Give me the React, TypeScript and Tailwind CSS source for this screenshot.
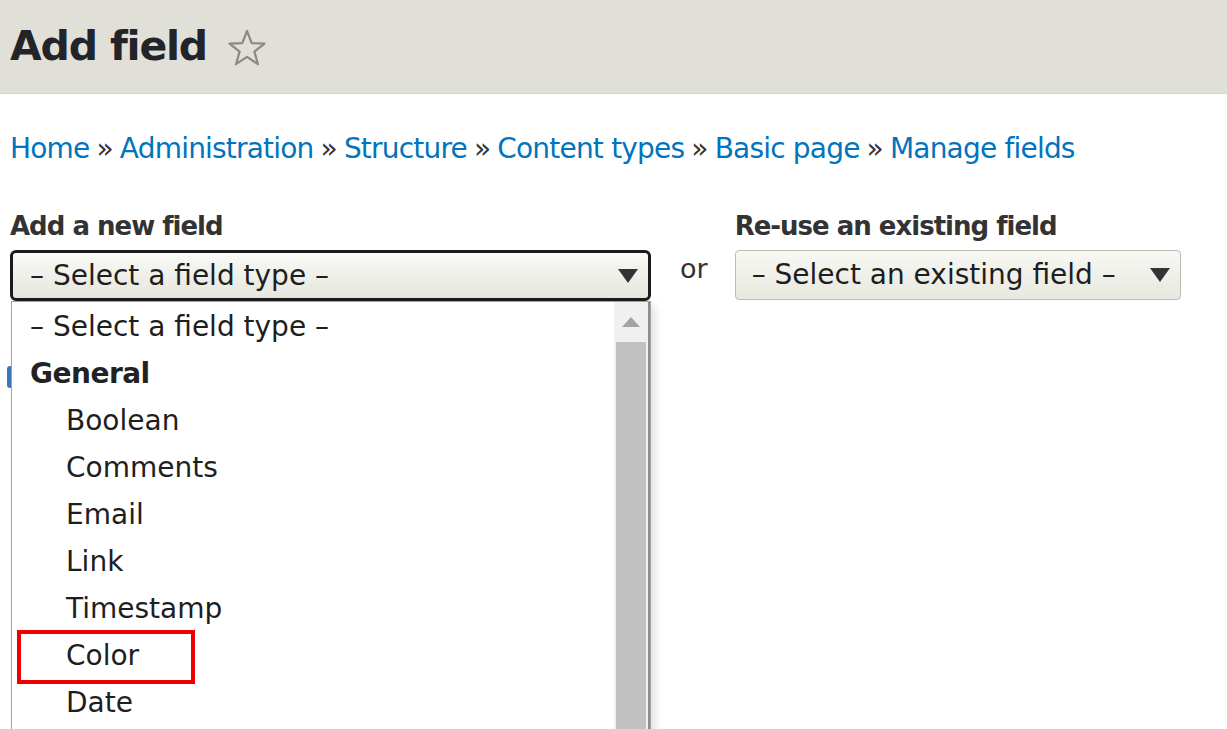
import React from "react";

const crumbs = ["Home", "Administration", "Structure", "Content types", "Basic page", "Manage fields"];
const general = ["Boolean", "Comments", "Email", "Link", "Timestamp", "Color", "Date"];

const Star = () => (
  <svg width="40" height="38" viewBox="0 0 40 38" className="ml-[20px] mt-[2px]">
    <path
      d="M20 2 L24.7 14.2 L37.5 14.6 L27.4 22.6 L31 35.2 L20 27.8 L9 35.2 L12.6 22.6 L2.5 14.6 L15.3 14.2 Z"
      fill="none"
      stroke="#8a8a80"
      strokeWidth="2.2"
      strokeLinejoin="round"
    />
  </svg>
);

const Caret = ({ className }: { className?: string }) => (
  <svg width="20" height="14" viewBox="0 0 20 14" className={className}>
    <path d="M0 0 H20 L10 14 Z" fill="#333" />
  </svg>
);

const FieldTypeList = () => (
  <div className="absolute left-[1px] top-full w-[640px] h-[460px] bg-white border border-[#a3a3a3] shadow-[4px_4px_8px_rgba(0,0,0,0.12)] overflow-hidden">
    <div className="flex h-full">
      <ul className="flex-1 text-[28px] text-[#1e1e1e] leading-[47px] pt-[1px]">
        <li className="pl-[18px]">– Select a field type –</li>
        <li className="pl-[18px] font-bold text-[#222] tracking-[-0.5px]">General</li>
        {general.map((item) => (
          <li key={item} className="pl-[54px] relative">
            {item === "Color" && (
              <span className="absolute left-[5px] top-[-2px] w-[178px] h-[54px] border-[4px] border-[#ee0000]" />
            )}
            {item}
          </li>
        ))}
      </ul>
      <div className="w-[36px] bg-[#f0f0f0] flex flex-col border-r-[2px] border-[#8c8c8c]">
        <div className="h-[40px] flex items-center justify-center">
          <svg width="18" height="10" viewBox="0 0 18 10">
            <path d="M0 10 L9 0 L18 10 Z" fill="#a3a3a3" />
          </svg>
        </div>
        <div className="flex-1 mx-[2px] bg-[#c1c1c1]" />
      </div>
    </div>
  </div>
);

export default function App() {
  return (
    <div className="w-[1227px] h-[729px] overflow-hidden bg-white font-['DejaVu_Sans',sans-serif] text-[#333]">
      <header className="h-[94px] bg-[#e0e0d8] border-b border-[#d4d4cc] flex items-center px-[10px]">
        <h1 className="text-[41px] font-bold text-[#232429] tracking-[-1.2px]">Add field</h1>
        <Star />
      </header>

      <main className="px-[10px]">
        <nav className="mt-[38px] text-[28px] leading-[34px] text-[#0074bd] tracking-[-0.8px]">
          {crumbs.map((c, i) => (
            <span key={c}>
              {i > 0 && <span className="text-[#333] mx-[7px]">»</span>}
              {c}
            </span>
          ))}
        </nav>

        <div className="flex mt-[45px]">
          <div className="w-[641px]">
            <label className="block text-[26px] font-bold leading-[30px] tracking-[-1px]">Add a new field</label>
            <div className="relative mt-[9px]">
              <div className="h-[51px] rounded-[6px] border-[3px] border-[#1b1b1b] bg-gradient-to-b from-[#fafaf6] to-[#e6e6de] flex items-center justify-between pl-[17px] pr-[10px] text-[28px] text-[#1e1e1e]">
                <span>– Select a field type –</span>
                <Caret />
              </div>
              <div className="absolute left-[-3px] top-[116px] w-[6px] h-[22px] rounded-full bg-[#3a78b8]" />
              <FieldTypeList />
            </div>
          </div>

          <div className="ml-[29px] pt-[38px] text-[27px]">or</div>

          <div className="ml-[27px]">
            <label className="block text-[26px] font-bold leading-[30px] tracking-[-1px]">Re-use an existing field</label>
            <div className="mt-[9px] h-[50px] w-[446px] rounded-[4px] border border-[#bcbcb4] bg-gradient-to-b from-[#f8f8f4] to-[#e8e8e0] flex items-center justify-between pl-[16px] pr-[10px] text-[28px] text-[#1e1e1e]">
              <span>– Select an existing field –</span>
              <Caret />
            </div>
          </div>
        </div>
      </main>
    </div>
  );
}
